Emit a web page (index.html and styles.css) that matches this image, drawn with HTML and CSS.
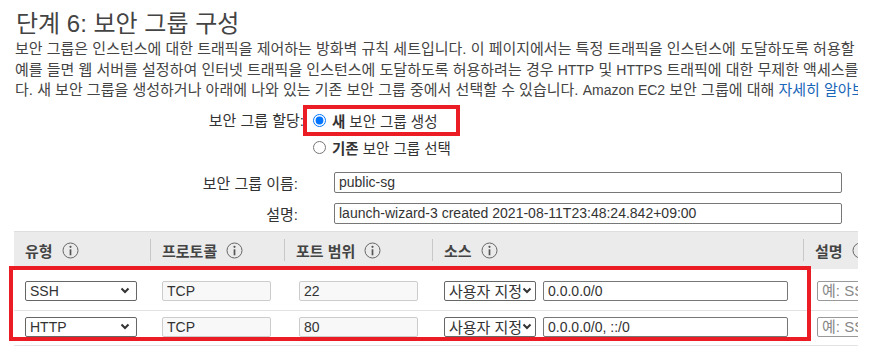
FILE: index.html
```html
<!DOCTYPE html>
<html lang="ko">
<head>
  <meta charset="UTF-8">
  <meta name="viewport" content="width=device-width, initial-scale=1.0">
  <title>단계 6: 보안 그룹 구성</title>
  <link rel="stylesheet" href="styles.css">
</head>
<body>
  <div class="page">
    <h1>단계 6: 보안 그룹 구성</h1>

    <p class="intro">
      보안 그룹은 인스턴스에 대한 트래픽을 제어하는 방화벽 규칙 세트입니다. 이 페이지에서는 특정 트래픽을 인스턴스에 도달하도록 허용할 규칙을 추가할 수 있습니<br>
      예를 들면 웹 서버를 설정하여 인터넷 트래픽을 인스턴스에 도달하도록 허용하려는 경우 <span class="en">HTTP</span> 및 <span class="en">HTTPS</span> 트래픽에 대한 무제한 액세스를 허용하는 규칙을 추가합니<br>
      다. 새 보안 그룹을 생성하거나 아래에 나와 있는 기존 보안 그룹 중에서 선택할 수 있습니다. <span class="en">Amazon EC2</span> 보안 그룹에 대해 <a href="#">자세히 알아보기</a>
    </p>

    <div class="assign">
      <span class="assign-label">보안 그룹 할당:</span>
      <div class="options">
        <label class="option selected"><input type="radio" name="sg" checked><span><b>새</b> 보안 그룹 생성</span></label>
        <label class="option"><input type="radio" name="sg"><span><b>기존</b> 보안 그룹 선택</span></label>
      </div>
    </div>

    <div class="field first">
      <label class="field-label" for="sgName">보안 그룹 이름:</label>
      <input class="text-input" id="sgName" type="text" value="public-sg">
    </div>
    <div class="field">
      <label class="field-label" for="sgDesc">설명:</label>
      <input class="text-input" id="sgDesc" type="text" value="launch-wizard-3 created 2021-08-11T23:48:24.842+09:00">
    </div>

    <div class="rules">
      <div class="rule-head">
        <div class="head-cell">유형 <svg class="info" width="17" height="17" viewBox="0 0 17 17"><circle cx="8.5" cy="8.5" r="7.5"/><circle class="dot" cx="8.5" cy="4.8" r="1.1"/><path d="M8.5 7.3v6"/></svg></div>
        <div class="head-cell sep">프로토콜 <svg class="info" width="17" height="17" viewBox="0 0 17 17"><circle cx="8.5" cy="8.5" r="7.5"/><circle class="dot" cx="8.5" cy="4.8" r="1.1"/><path d="M8.5 7.3v6"/></svg></div>
        <div class="head-cell sep">포트 범위 <svg class="info" width="17" height="17" viewBox="0 0 17 17"><circle cx="8.5" cy="8.5" r="7.5"/><circle class="dot" cx="8.5" cy="4.8" r="1.1"/><path d="M8.5 7.3v6"/></svg></div>
        <div class="head-cell sep">소스 <svg class="info" width="17" height="17" viewBox="0 0 17 17"><circle cx="8.5" cy="8.5" r="7.5"/><circle class="dot" cx="8.5" cy="4.8" r="1.1"/><path d="M8.5 7.3v6"/></svg></div>
        <div class="head-cell sep">설명 <svg class="info" width="17" height="17" viewBox="0 0 17 17"><circle cx="8.5" cy="8.5" r="7.5"/><circle class="dot" cx="8.5" cy="4.8" r="1.1"/><path d="M8.5 7.3v6"/></svg></div>
      </div>

      <div class="rule-row row-1">
        <div class="cell c-type">
          <div class="select type-select"><span class="select-text">SSH</span><svg class="chev" width="10" height="7" viewBox="0 0 10 7"><path d="M1.5 1.5l3.5 3.5 3.5-3.5"/></svg></div>
        </div>
        <div class="cell c-proto"><input class="ro-input proto" type="text" value="TCP" readonly></div>
        <div class="cell c-port"><input class="ro-input port" type="text" value="22" readonly></div>
        <div class="cell c-source">
          <div class="select source-select"><span class="select-text">사용자 지정</span><svg class="chev" width="10" height="7" viewBox="0 0 10 7"><path d="M1.5 1.5l3.5 3.5 3.5-3.5"/></svg></div>
          <input class="cidr" type="text" value="0.0.0.0/0">
        </div>
        <div class="cell c-desc"><input class="desc-input" type="text" placeholder="예: SSH for Admin Desktop"></div>
      </div>

      <div class="rule-row row-2">
        <div class="cell c-type">
          <div class="select type-select"><span class="select-text">HTTP</span><svg class="chev" width="10" height="7" viewBox="0 0 10 7"><path d="M1.5 1.5l3.5 3.5 3.5-3.5"/></svg></div>
        </div>
        <div class="cell c-proto"><input class="ro-input proto" type="text" value="TCP" readonly></div>
        <div class="cell c-port"><input class="ro-input port" type="text" value="80" readonly></div>
        <div class="cell c-source">
          <div class="select source-select"><span class="select-text">사용자 지정</span><svg class="chev" width="10" height="7" viewBox="0 0 10 7"><path d="M1.5 1.5l3.5 3.5 3.5-3.5"/></svg></div>
          <input class="cidr" type="text" value="0.0.0.0/0, ::/0">
        </div>
        <div class="cell c-desc"><input class="desc-input" type="text" placeholder="예: SSH for Admin Desktop"></div>
      </div>

      <div class="highlight"></div>
    </div>
  </div>
</body>
</html>
```

FILE: styles.css
```css
body {
  margin: 0;
  background-color: #ffffff;
  color: #444;
  font-family: "Liberation Sans", "Noto Sans CJK KR", sans-serif;
  font-size: 14px;
}

.page {
  width: 858px;
  height: 357px;
  overflow: hidden;
  padding-left: 15px;
  box-sizing: border-box;
}

h1 {
  margin: 9px 0 0 1px;
  font-size: 24px;
  font-weight: normal;
  line-height: 30px;
  color: #444;
  white-space: nowrap;
}

.intro {
  margin: 0;
  font-size: 15px;
  line-height: 20.5px;
  white-space: nowrap;
}

.intro .en {
  font-size: 14px;
}

.intro a {
  color: #1a66b8;
  text-decoration: none;
}

/* security group assignment */
.assign {
  display: flex;
  margin-top: 8px;
}

.assign-label {
  width: 289px;
  padding-right: 3px;
  text-align: right;
  font-size: 15px;
  line-height: 23px;
  color: #333;
}

.options {
  display: flex;
  flex-direction: column;
  align-items: flex-start;
  gap: 4px;
}

.option {
  display: flex;
  align-items: center;
  height: 23px;
  padding: 0 19px 0 6px;
  gap: 6px;
  font-size: 14.5px;
  color: #333;
}

.option input {
  margin: 0;
  width: 13px;
  height: 13px;
}

.option.selected {
  outline: 4px solid #ec1c24;
}

/* name / description fields */
.field {
  display: flex;
  align-items: center;
  margin-top: 10px;
}

.field.first {
  margin-top: 13px;
}

.field-label {
  width: 283px;
  padding-right: 2px;
  text-align: right;
  font-size: 15px;
  color: #333;
}

.text-input {
  margin-left: 34px;
  width: 508px;
  height: 21px;
  box-sizing: border-box;
  padding: 0 4px;
  border: 1px solid #777;
  border-radius: 2px;
  font-family: inherit;
  font-size: 14px;
  color: #333;
}

/* rules table */
.rules {
  position: relative;
  width: 844px;
  margin: 7px 0 0 -1px;
}

.rule-head,
.rule-row {
  display: grid;
  grid-template-columns: 136px 134px 148px 371px 55px;
}

.rule-head {
  height: 37px;
  align-items: center;
  background-color: #ebebeb;
  border-top: 1px solid #dedede;
}

.head-cell {
  display: flex;
  align-items: center;
  gap: 9px;
  height: 22px;
  padding-left: 11px;
  font-size: 15px;
  font-weight: bold;
  color: #444;
  white-space: nowrap;
  overflow: hidden;
}

.head-cell.sep {
  border-left: 1px solid #c8c8c8;
  padding-left: 11px;
}

.info {
  flex: none;
  fill: none;
  stroke: #666;
  stroke-width: 1;
}

.info .dot {
  fill: #555;
  stroke: none;
}

.info path {
  stroke: #555;
  stroke-width: 1.7;
}

.rule-row {
  border-bottom: 1px solid #e3e3e3;
  align-items: center;
}

.row-1 {
  padding: 12px 0 9px;
}

.row-2 {
  padding: 6px 0 8px;
}

.cell {
  display: flex;
  align-items: center;
  overflow: hidden;
}

.c-type { padding-left: 11px; }
.c-proto { padding-left: 12px; }
.c-port { padding-left: 15px; }
.c-source { padding-left: 12px; gap: 7px; }
.c-desc { padding-left: 14px; }

.select {
  display: flex;
  align-items: center;
  height: 20px;
  box-sizing: border-box;
  border: 1px solid #666;
  border-radius: 2px;
  background-color: #fff;
  padding: 0 6px 0 4px;
  color: #333;
}

.select-text {
  flex: 1;
  overflow: hidden;
  white-space: nowrap;
}

.type-select { width: 112px; }

.source-select {
  width: 92px;
  padding-right: 3px;
  font-size: 15px;
}

.chev {
  flex: none;
  fill: none;
  stroke: #333;
  stroke-width: 2;
  background-color: #fff;
}

.ro-input,
.cidr,
.desc-input {
  height: 20px;
  box-sizing: border-box;
  padding: 0 4px;
  border-radius: 2px;
  font-family: inherit;
  font-size: 14px;
  color: #333;
}

.ro-input {
  border: 1px solid #cccccc;
  background-color: #f8f8f8;
}

.proto { width: 109px; }
.port { width: 119px; }

.cidr {
  width: 245px;
  border: 1px solid #777;
  background-color: #fff;
}

.desc-input {
  flex: none;
  width: 160px;
  border: 1px solid #999;
  background-color: #fff;
  font-size: 15px;
}

.desc-input::placeholder {
  color: #888;
}

.highlight {
  position: absolute;
  left: -5px;
  top: 35px;
  width: 802px;
  height: 75px;
  box-sizing: border-box;
  border: 4px solid #ec1c24;
  pointer-events: none;
}
```
